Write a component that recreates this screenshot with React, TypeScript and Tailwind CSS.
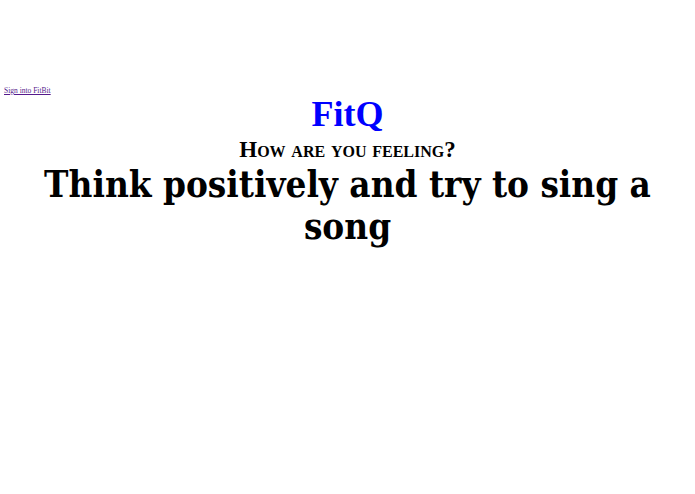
export default function App() {
  return (
    <div className="min-h-[494px] bg-white" style={{ fontFamily: '"Liberation Serif", serif' }}>
      <div className="pt-[83px] pl-[4px] leading-[10px]">
        <a href="#" className="text-[7.5px] text-[#551a8b] underline">Sign into FitBit</a>
      </div>
      <div className="flex flex-col items-center text-center">
        <h1 className="-mt-[2px] text-[36px] leading-[40px] font-bold text-[#0000ff]">FitQ</h1>
        <h2 className="mt-[2px] text-[23px] leading-[27px] font-bold text-black [font-variant:small-caps]">How are you feeling?</h2>
        <h3
          className="mt-[1px] px-[30px] text-[36.5px] leading-[42px] font-bold text-black"
          style={{ fontFamily: '"DejaVu Serif Condensed", "DejaVu Serif", serif', fontStretch: 'condensed' }}
        >
          Think positively and try to sing a song
        </h3>
      </div>
    </div>
  );
}
